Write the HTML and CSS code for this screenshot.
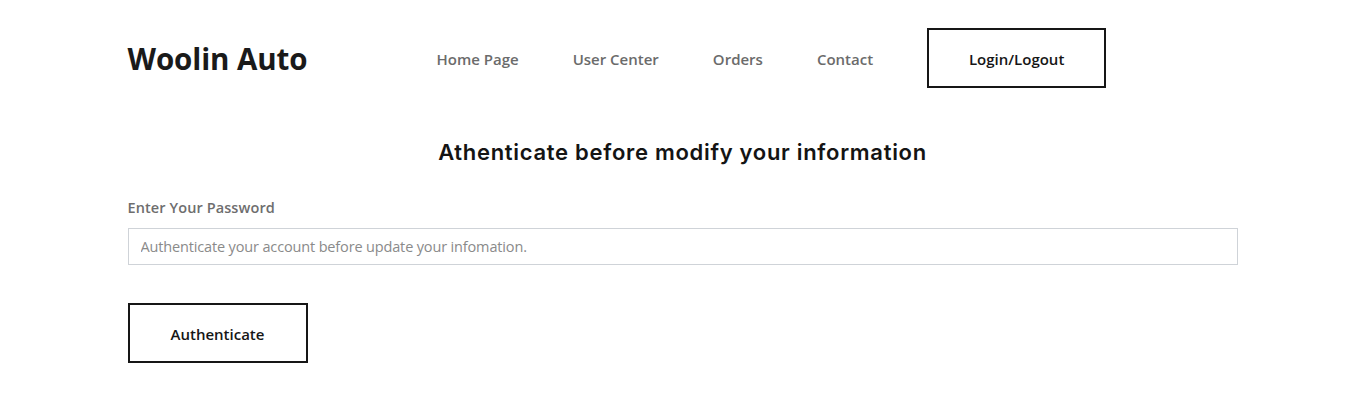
FILE: index.html
```html
<!DOCTYPE html>
<html lang="en">
<head>
<meta charset="utf-8">
<title>Woolin Auto</title>
<link rel="stylesheet" href="styles.css">
</head>
<body>
<div class="container">
  <header class="header">
    <div class="logo">Woolin Auto</div>
    <nav class="nav">
      <a class="nav-link" href="#">Home Page</a>
      <a class="nav-link" href="#">User Center</a>
      <a class="nav-link" href="#">Orders</a>
      <a class="nav-link" href="#">Contact</a>
    </nav>
    <a class="btn btn-login" href="#">Login/Logout</a>
  </header>
  <main class="main">
    <h2 class="title">Athenticate before modify your information</h2>
    <form class="form">
      <label class="label" for="pw">Enter Your Password</label>
      <input class="input" id="pw" type="password" placeholder="Authenticate your account before update your infomation.">
      <button class="btn btn-auth" type="button">Authenticate</button>
    </form>
  </main>
</div>
</body>
</html>
```
FILE: styles.css
```css
* { box-sizing: border-box; }
body {
  margin: 0;
  background: #fff;
  font-family: "Open Sans", "Noto Sans", sans-serif;
  color: #111;
}
.container {
  width: 1110px;
  margin: 0 auto;
}
.header {
  display: flex;
  align-items: center;
  padding-top: 28px;
  height: 88px;
}
.logo {
  font-size: 29.5px;
  font-weight: 700;
  color: #1a1a1a;
  width: 309px;
  letter-spacing: -0.1px;
  padding-top: 1px;
}
.nav {
  display: flex;
}
.nav-link {
  font-size: 15px;
  font-weight: 600;
  color: #6b6b6b;
  text-decoration: none;
  margin-right: 54px;
  padding-top: 2px;
}
.btn {
  display: flex;
  align-items: center;
  justify-content: center;
  border: 2px solid #161616;
  background: #fff;
  color: #161616;
  font-family: inherit;
  font-size: 15px;
  font-weight: 600;
  text-decoration: none;
  padding: 2px 0 0;
}
.btn-login {
  width: 179px;
  height: 60px;
}
.main {
  padding-top: 51px;
}
.title {
  margin: 0;
  text-align: center;
  font-family: "Inter", sans-serif;
  font-weight: 600;
  font-size: 22px;
  color: #141414;
  letter-spacing: 0.7px;
}
.form {
  display: flex;
  flex-direction: column;
  align-items: flex-start;
  padding-top: 33px;
}
.label {
  font-size: 14.5px;
  font-weight: 600;
  color: #6e6e6e;
  letter-spacing: 0.1px;
}
.input {
  margin-top: 11px;
  width: 100%;
  height: 37px;
  border: 1px solid #cfd3d8;
  padding: 0 12px;
  font-family: inherit;
  font-size: 14.5px;
  color: #333;
  outline: none;
  letter-spacing: -0.15px;
}
.input::placeholder {
  color: #8a8a8a;
}
.btn-auth {
  margin-top: 38px;
  width: 180px;
  height: 60px;
}
```
